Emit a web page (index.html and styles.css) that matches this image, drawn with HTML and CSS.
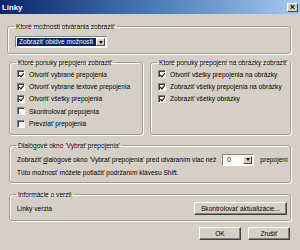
FILE: index.html
```html
<!DOCTYPE html>
<html>
<head>
<meta charset="utf-8">
<link rel="stylesheet" href="styles.css">
</head>
<body>
<div class="window">
  <div class="titlebar">
    <span class="title">Linky</span>
    <span class="close">×</span>
  </div>
  <div class="content">
    <fieldset class="group g1">
      <legend>Ktoré možnosti otvárania zobraziť</legend>
      <div class="select">
        <span class="sel-text">Zobraziť obidve možnosti</span>
        <span class="dd-btn"><span class="tri"></span></span>
      </div>
    </fieldset>
    <div class="row">
      <fieldset class="group g2">
        <legend>Ktoré ponuky prepojení zobraziť</legend>
        <div class="check"><span class="box on"></span>Otvoriť vybrané prepojenia</div>
        <div class="check"><span class="box on"></span>Otvoriť vybrané textové prepojenia</div>
        <div class="check"><span class="box on"></span>Otvoriť všetky prepojenia</div>
        <div class="check"><span class="box"></span>Skontrolovať prepojenia</div>
        <div class="check"><span class="box"></span>Prevziať prepojenia</div>
      </fieldset>
      <fieldset class="group g2">
        <legend>Ktoré ponuky prepojení na obrázky zobraziť</legend>
        <div class="check"><span class="box on"></span>Otvoriť všetky prepojenia na obrázky</div>
        <div class="check"><span class="box on"></span>Zobraziť všetky prepojenia na obrázky</div>
        <div class="check"><span class="box on"></span>Zobraziť všetky obrázky</div>
      </fieldset>
    </div>
    <fieldset class="group g3">
      <legend>Dialógové okno 'Vybrať prepojenia'</legend>
      <div class="line">
        <span>Zobraziť <u>d</u>ialógové okno 'Vybrať prepojenia' pred otváraním viac než</span>
        <span class="spin"><span class="spin-val">0</span><span class="dd-btn"><span class="tri"></span></span></span>
        <span>prepojení</span>
      </div>
      <div class="line">Túto možnosť môžete potlačiť podržaním klávesu Shift.</div>
    </fieldset>
    <fieldset class="group g4">
      <legend>Informácie o verzii</legend>
      <div class="line between">
        <span>Linky verzia</span>
        <span class="btn wide">Skontrolovať aktualizácie...</span>
      </div>
    </fieldset>
    <div class="buttons">
      <span class="btn">OK</span>
      <span class="btn">Zrušiť</span>
    </div>
  </div>
</div>
</body>
</html>
```

FILE: styles.css
```css
* { box-sizing: border-box; }
html, body { margin: 0; padding: 0; }
body {
  width: 300px;
  height: 250px;
  overflow: hidden;
  background: #d4d0c8;
  font-family: "Liberation Sans", Arial, sans-serif;
  font-size: 6.6px;
  color: #000;
}
.window {
  width: 300px;
  height: 250px;
  background: #d4d0c8;
}
.titlebar {
  height: 14px;
  display: flex;
  align-items: center;
  justify-content: space-between;
  padding: 0 2px 0 2px;
  background: linear-gradient(to right, #0a246a 0%, #4a78b4 50%, #a6caf0 100%);
}
.title {
  color: #fff;
  font-weight: bold;
  font-size: 7.8px;
}
.close {
  width: 11px;
  height: 9px;
  background: #d4d0c8;
  border: 1px solid;
  border-color: #fff #404040 #404040 #fff;
  font-size: 9px;
  font-weight: bold;
  line-height: 6px;
  text-align: center;
  color: #000;
}
.content {
  padding: 8px 9px 0 9px;
  display: flex;
  flex-direction: column;
}
.group {
  margin: 0;
  border: 1px solid #a09c94;
  border-radius: 3px;
  box-shadow: 1px 1px 0 #fff, inset 1px 1px 0 #fff;
  padding: 0 0 0 7px;
  min-width: 0;
}
.group legend {
  padding: 0 2px;
  margin-left: -1px;
  line-height: 9px;
}
.g1 {
  margin-left: -2px;
  height: 32px;
  padding-top: 5px;
  padding-left: 7px;
}
.select {
  width: 92px;
  height: 12px;
  display: flex;
  background: #fff;
  border: 1px solid;
  border-color: #808080 #fff #fff #808080;
  padding: 1px;
}
.sel-text {
  flex: 1;
  background: #0a246a;
  color: #fff;
  line-height: 8px;
  padding-left: 2px;
}
.dd-btn {
  width: 9px;
  background: #d4d0c8;
  border: 1px solid;
  border-color: #fff #404040 #404040 #fff;
  display: flex;
  align-items: center;
  justify-content: center;
}
.tri {
  width: 0;
  height: 0;
  border-left: 2.5px solid transparent;
  border-right: 2.5px solid transparent;
  border-top: 3px solid #000;
}
.row {
  display: grid;
  grid-template-columns: 134px 1fr;
  gap: 7px;
  margin-top: 4px;
}
.g2 {
  height: 77px;
  padding-top: 1px;
}
.check {
  display: flex;
  align-items: center;
  height: 12.4px;
  white-space: nowrap;
}
.box {
  width: 8px;
  height: 8px;
  background: #fff;
  border: 1px solid;
  border-color: #808080 #fff #fff #808080;
  box-shadow: inset 1px 1px 0 #404040;
  margin-right: 4px;
  flex: none;
  position: relative;
}
.box.on::after {
  content: "";
  position: absolute;
  left: 1.5px;
  top: 0.5px;
  width: 2px;
  height: 4px;
  border: solid #000;
  border-width: 0 1.5px 1.5px 0;
  transform: rotate(40deg);
}
.g3 {
  margin-top: 6px;
  height: 42px;
  padding-top: 3px;
}
.line {
  display: flex;
  align-items: center;
  height: 13px;
  white-space: nowrap;
}
.spin {
  display: flex;
  width: 32px;
  height: 12px;
  margin: 0 6px 0 6px;
  background: #fff;
  border: 1px solid;
  border-color: #808080 #fff #fff #808080;
  padding: 1px;
}
.spin-val {
  flex: 1;
  padding-left: 3px;
  line-height: 8px;
}
.g4 {
  margin-top: 7px;
  height: 31px;
  padding-top: 2px;
  padding-right: 3px;
}
.between {
  justify-content: space-between;
  height: 15px;
}
.btn {
  display: flex;
  align-items: center;
  justify-content: center;
  background: #d4d0c8;
  border: 1px solid;
  border-color: #fff #404040 #404040 #fff;
  box-shadow: inset -1px -1px 0 #808080;
  height: 13px;
  width: 42px;
}
.btn.wide {
  width: 93px;
}
.buttons {
  display: flex;
  justify-content: flex-end;
  gap: 7px;
  margin-top: 6px;
  margin-right: 1px;
}
```
